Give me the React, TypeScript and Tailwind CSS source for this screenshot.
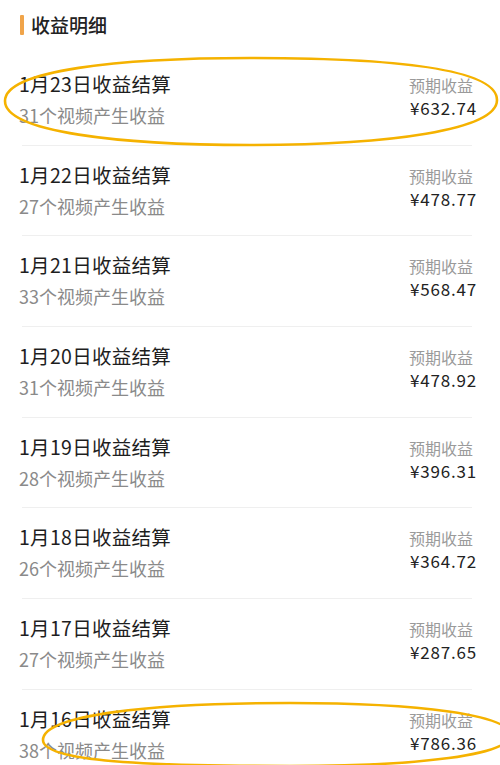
import React from "react";

const rows = [
  { d: "1月23日收益结算", n: "31个视频产生收益", a: "¥632.74" },
  { d: "1月22日收益结算", n: "27个视频产生收益", a: "¥478.77" },
  { d: "1月21日收益结算", n: "33个视频产生收益", a: "¥568.47" },
  { d: "1月20日收益结算", n: "31个视频产生收益", a: "¥478.92" },
  { d: "1月19日收益结算", n: "28个视频产生收益", a: "¥396.31" },
  { d: "1月18日收益结算", n: "26个视频产生收益", a: "¥364.72" },
  { d: "1月17日收益结算", n: "27个视频产生收益", a: "¥287.65" },
  { d: "1月16日收益结算", n: "38个视频产生收益", a: "¥786.36" },
];

export default function App() {
  return (
    <div
      className="relative w-[500px] h-[765px] overflow-hidden bg-white"
      style={{ fontFamily: '"Noto Sans CJK SC", "Noto Sans", sans-serif' }}
    >
      <div className="flex items-center h-[55px] pl-[20px] pb-[5px]">
        <div className="w-[4px] h-[20px] bg-[#f0a44a] rounded-[1px]" />
        <div className="ml-[7px] text-[19px] leading-[24px] text-[#222] font-medium">收益明细</div>
      </div>
      <div className="pl-[19px] pr-[23px]">
        {rows.map((r, i) => (
          <div key={i}>
            {i > 0 && <div className="h-px bg-[#efefef] ml-[3px] mr-[5px]" />}
            <div className="flex justify-between pt-[17px] pb-[17.7px]">
              <div className="flex flex-col gap-[7px]">
                <div className="text-[19.5px] leading-[24px] text-[#1e1e1e] tracking-[0.3px]">{r.d}</div>
                <div className="text-[18px] leading-[24px] text-[#8a8a8a]">{r.n}</div>
              </div>
              <div className="flex flex-col items-end pt-[2px]">
                <div className="text-[16px] leading-[22px] text-[#9a9a9a] pr-[4px]">预期收益</div>
                <div className="text-[17px] leading-[24px] text-[#222] tracking-[0.8px]">{r.a}</div>
              </div>
            </div>
          </div>
        ))}
      </div>
      <svg className="absolute inset-0 pointer-events-none" width="500" height="765" viewBox="0 0 500 765">
        <path
          d="M 5 101 C 5 70, 120 58, 250 58 C 390 58, 497 68, 497 100 C 497 130, 390 145, 250 145 C 120 145, 5 132, 5 101 Z"
          fill="none"
          stroke="#f5b200"
          strokeWidth="2.6"
        />
        <path
          d="M 43 740 C 43 715, 150 703, 290 703 C 420 703, 510 715, 510 735 C 510 755, 420 766, 290 766 C 150 766, 43 762, 43 740 Z"
          fill="none"
          stroke="#f5b200"
          strokeWidth="2.6"
        />
      </svg>
    </div>
  );
}
